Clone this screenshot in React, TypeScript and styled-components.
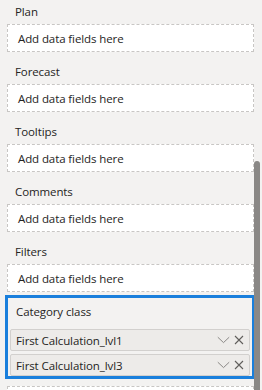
import React from "react";
import styled, { createGlobalStyle } from "styled-components";

const GlobalStyle = createGlobalStyle`
  html, body {
    margin: 0;
    padding: 0;
    background: #f3f2f1;
  }
  body {
    font-family: "Open Sans", "Noto Sans", "Liberation Sans", sans-serif;
    color: #252423;
  }
`;

const Pane = styled.div`
  position: relative;
  width: 262px;
  height: 390px;
  overflow: hidden;
  background: #f3f2f1;
  box-sizing: border-box;
  padding: 0 8px 0 7px;
`;

const Content = styled.div`
  display: flex;
  flex-direction: column;
  margin-top: -8px;
`;

const Section = styled.div`
  display: flex;
  flex-direction: column;
`;

const Label = styled.div`
  font-size: 11.5px;
  line-height: 16px;
  padding: 12px 0 4px 8px;
  letter-spacing: -0.1px;
`;

const DropZone = styled.div`
  box-sizing: border-box;
  height: 28px;
  border: 1px dashed #c8c6c4;
  background: #ffffff;
  display: flex;
  align-items: center;
  padding-left: 10px;
  font-size: 11.5px;
  letter-spacing: -0.1px;
  color: #252423;
`;

const Well = styled.div`
  box-sizing: border-box;
  margin: 3px -1px 0 -2px;
  border: 3px solid #1a7fdc;
  background: #f3f2f1;
  padding: 0 2px;
  display: flex;
  flex-direction: column;
  gap: 3px;
`;

const WellLabel = styled.div`
  font-size: 11.5px;
  line-height: 16px;
  padding: 6px 0 6px 6px;
  letter-spacing: -0.1px;
`;

const Pill = styled.div`
  box-sizing: border-box;
  height: 22px;
  border: 1px solid #d2d0ce;
  border-radius: 2px;
  background: #edebe9;
  display: flex;
  align-items: center;
  padding: 0 5px;
  font-size: 11.5px;
  letter-spacing: -0.1px;
`;

const PillText = styled.span`
  flex: 1;
  white-space: nowrap;
  overflow: hidden;
`;

const PillIcons = styled.span`
  display: flex;
  align-items: center;
  gap: 4px;
`;

const IconBox = styled.span<{ $tone: string }>`
  display: flex;
  color: ${(p) => p.$tone};
`;

const EmptyZone = styled(DropZone)`
  margin-top: 7px;
`;

const Scrollbar = styled.div`
  position: absolute;
  right: 2px;
  top: 161px;
  width: 6px;
  bottom: 0;
  background: #8a8886;
  border-radius: 3px 3px 0 0;
`;

const Chevron = () => (
  <svg width="13" height="8" viewBox="0 0 13 8" fill="none">
    <path d="M0.8 1.2 L6.5 6.6 L12.2 1.2" stroke="currentColor" strokeWidth="1" />
  </svg>
);

const Close = () => (
  <svg width="10" height="10" viewBox="0 0 10 10" fill="none">
    <path d="M1 1 L9 9 M9 1 L1 9" stroke="currentColor" strokeWidth="1.1" />
  </svg>
);

const fields = ["Plan", "Forecast", "Tooltips", "Comments", "Filters"];
const pills = ["First Calculation_lvl1", "First Calculation_lvl3"];

export default function App() {
  return (
    <>
      <GlobalStyle />
      <Pane>
        <Content>
          {fields.map((name) => (
            <Section key={name}>
              <Label>{name}</Label>
              <DropZone>Add data fields here</DropZone>
            </Section>
          ))}
          <Well>
            <WellLabel>Category class</WellLabel>
            {pills.map((p) => (
              <Pill key={p}>
                <PillText>{p}</PillText>
                <PillIcons>
                  <IconBox $tone="#8a8886">
                    <Chevron />
                  </IconBox>
                  <IconBox $tone="#605e5c">
                    <Close />
                  </IconBox>
                </PillIcons>
              </Pill>
            ))}
          </Well>
          <EmptyZone />
        </Content>
        <Scrollbar />
      </Pane>
    </>
  );
}
